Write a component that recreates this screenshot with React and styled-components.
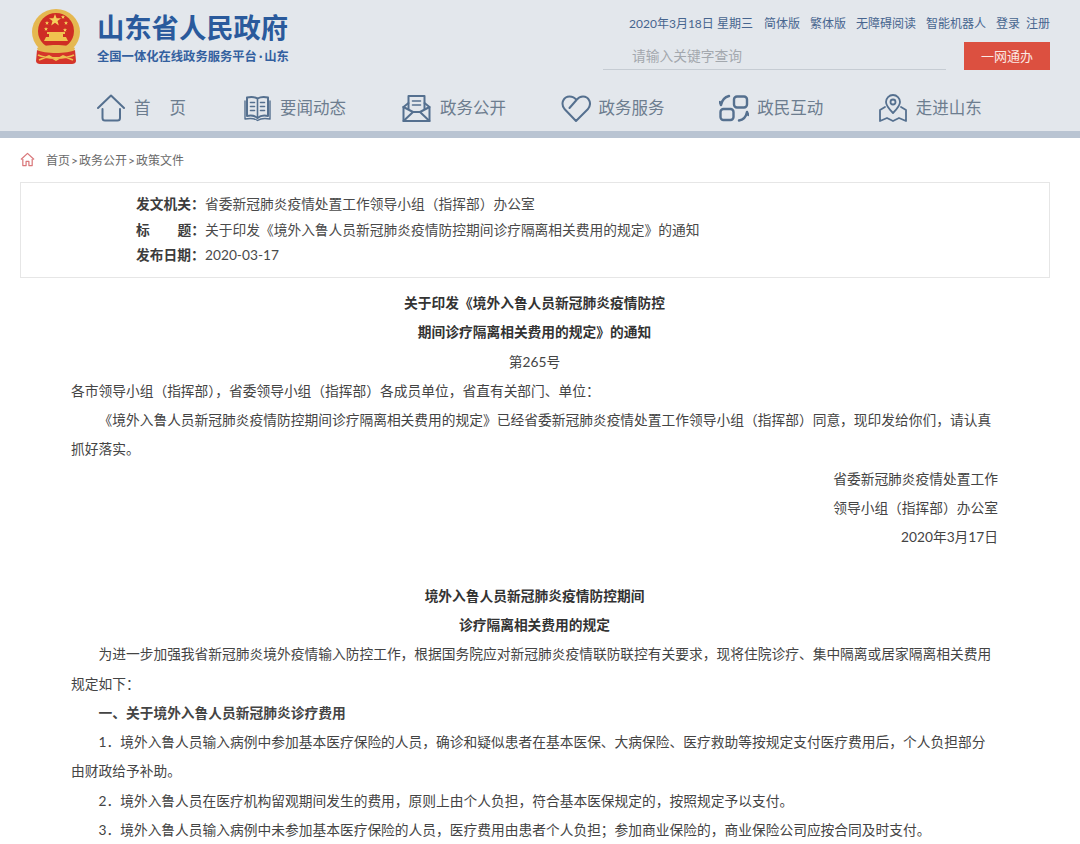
import React from 'react';
import styled, { createGlobalStyle } from 'styled-components';

const GlobalStyle = createGlobalStyle`
  html, body {
    margin: 0;
    padding: 0;
    background: #fff;
    height: 844px;
    overflow: hidden;
  }
  body {
    font-family: Lato, "Noto Sans CJK SC", sans-serif;
    color: #3a3a3a;
  }
`;

const Header = styled.header`
  height: 131px;
  background: #e3e7ec;
  border-bottom: 7px solid #b9c4d2;
  display: flex;
  flex-direction: column;
`;

const TopRow = styled.div`
  display: flex;
  justify-content: space-between;
  height: 85px;
  padding: 0 30px 0 32px;
`;

const Brand = styled.div`
  display: flex;
  align-items: flex-start;
  gap: 17px;
  padding-top: 9px;
`;

const BrandText = styled.div`
  display: flex;
  flex-direction: column;
  padding-top: 1px;
`;

const BrandTitle = styled.div`
  font-size: 27.3px;
  line-height: 36px;
  font-weight: 700;
  color: #2a5a9c;
`;

const BrandSub = styled.div`
  font-size: 12.3px;
  line-height: 20px;
  margin-top: 1px;
  font-weight: 700;
  color: #33609f;
`;

const BrandDot = styled.span`
  margin: 0 2px;
`;

const TopRight = styled.div`
  display: flex;
  flex-direction: column;
  align-items: flex-end;
  padding-top: 15px;
`;

const TopLinks = styled.div`
  display: flex;
  gap: 10px;
  font-size: 12px;
  line-height: 18px;
  color: #47658f;
`;

const DateText = styled.span`
  margin-right: 1px;
`;

const AuthLinks = styled.span`
  display: flex;
  gap: 6px;
`;

const SearchRow = styled.div`
  display: flex;
  gap: 18px;
  margin-top: 9px;
`;

const SearchBox = styled.div`
  width: 343px;
  height: 28px;
  box-sizing: border-box;
  padding-left: 29px;
  border-bottom: 1px solid #c6ccd3;
  font-size: 13.75px;
  line-height: 28px;
  color: #a3a8ae;
`;

const OneButton = styled.div`
  width: 86px;
  height: 28px;
  background: #dc5040;
  color: #fbe9e4;
  font-size: 13px;
  line-height: 28px;
  text-align: center;
`;

const Nav = styled.nav`
  display: flex;
  padding: 8px 0 0 97px;
  height: 46px;
  box-sizing: border-box;
  align-items: flex-start;
`;

const NavItem = styled.div`
  width: ${p => p.$width || 158.6}px;
  flex: none;
  display: flex;
  align-items: center;
  gap: ${p => p.$gap || 8}px;
  font-size: 16.5px;
  line-height: 30px;
  color: #6d7d8f;
  svg {
    width: 30px;
    height: 30px;
    flex: none;
    color: #55708f;
  }
`;

const HomeLabel = styled.span`
  letter-spacing: 19px;
`;

const Crumbs = styled.div`
  display: flex;
  align-items: center;
  gap: 11px;
  height: 44px;
  box-sizing: border-box;
  padding: 0 0 2px 20px;
  font-size: 12px;
  color: #6a6a6a;
  svg {
    width: 15px;
    height: 15px;
    color: #d9777a;
  }
`;

const CrumbSep = styled.span`
  margin: 0 1px;
`;

const InfoCard = styled.section`
  margin: 0 30px 0 20px;
  height: 96px;
  box-sizing: border-box;
  padding: 8px 0 0 115px;
  border: 1px solid #e6e6e6;
`;

const InfoRow = styled.div`
  display: flex;
  font-size: 13.74px;
  line-height: 25.6px;
  color: #4a4a4a;
`;

const InfoLabel = styled.b`
  width: 69px;
  flex: none;
  display: flex;
  justify-content: space-between;
  color: #3c3c3c;
`;

const Article = styled.article`
  padding: 10px 82px 0 71px;
  font-size: 13.74px;
  line-height: 29.28px;
  color: #444;
`;

const Heading = styled.div`
  text-align: center;
  font-weight: 700;
  color: #333;
`;

const Centered = styled.div`
  text-align: center;
`;

const Para = styled.p`
  margin: 0;
  text-indent: ${p => (p.$flush ? 0 : '2em')};
  font-weight: ${p => (p.$bold ? 700 : 400)};
`;

const Signature = styled.div`
  text-align: right;
`;

const Gap = styled.div`
  height: 29.28px;
`;

const strokeProps = {
  viewBox: '0 0 30 30',
  fill: 'none',
  stroke: 'currentColor',
  strokeWidth: 2,
  strokeLinecap: 'round',
  strokeLinejoin: 'round',
};

const smallStar = (x, y) => (
  <polygon
    key={`${x}-${y}`}
    transform={`translate(${x} ${y}) scale(0.4)`}
    points="0,-5 1.4,-1.6 5,-1.6 2.2,0.7 3.2,4.2 0,2.2 -3.2,4.2 -2.2,0.7 -5,-1.6 -1.4,-1.6"
    fill="#f5cf5b"
  />
);

const Emblem = () => (
  <svg width="48" height="56" viewBox="0 0 48 56">
    <ellipse cx="24" cy="23" rx="24" ry="23" fill="#e5b850" />
    <circle cx="24" cy="22" r="18" fill="#cf2d24" />
    <polygon points="23,5 24.6,9.2 29,9.2 25.5,12 26.8,16.4 23,13.8 19.2,16.4 20.5,12 17,9.2 21.4,9.2" fill="#f5cf5b" />
    {[[15, 14], [31, 8], [34, 14], [14, 20], [33, 21]].map(([x, y]) => smallStar(x, y))}
    <path d="M12 32 H36 L34 28 H31 V25 H33 V23 H15 V25 H17 V28 H14 Z" fill="#f0c24f" />
    <path d="M5 39 C12 35 36 35 43 39 L41 44 H7 Z" fill="#e5b850" />
    <path d="M5 41 C12 45 36 45 43 41 L44 52 C44 54 42 55 40 55 L8 55 C6 55 4 54 4 52 Z" fill="#d5352a" />
    <path d="M6 46 C14 50 34 50 42 46 M7 51 L17 47 L24 51 L31 47 L41 51" fill="none" stroke="#edc04f" strokeWidth="1.8" />
  </svg>
);

const HomeIcon = () => (
  <svg {...strokeProps}>
    <path d="M1 15 L14 2.5 L27 15" />
    <path d="M5.5 16 V25 Q5.5 27.5 8 27.5 H20.5 Q23 27.5 23 25 V16" />
  </svg>
);

const BookIcon = () => (
  <svg {...strokeProps}>
    <path d="M3 4.5 C7 3.5 10 3.5 13.5 5.5 C17 3.5 20 3.5 24 4.5 V23 C20 22 17 22 13.5 25 C10 22 7 22 3 23 Z" />
    <path d="M13.5 5.5 V25 M6.5 9.5 H10.5 M6.5 13.5 H10.5 M6.5 17.5 H10.5 M16.5 9.5 H20.5 M16.5 13.5 H20.5 M16.5 17.5 H20.5" strokeWidth="1.6" />
    <path d="M1 8 V26 C6 25 10 25 13.5 27.5 C17 25 21 25 26 26 V8" strokeWidth="1.4" />
  </svg>
);

const MailIcon = () => (
  <svg {...strokeProps}>
    <path d="M1.5 14 V28 H27.5 V14 L22.5 10" />
    <path d="M1.5 14 L6.5 10" />
    <path d="M6.5 16 V3 H22.5 V16" />
    <path d="M10.5 8 H18.5 M10.5 12 H18.5" strokeWidth="1.6" />
    <path d="M1.5 28 L11 19 H18 L27.5 28" />
    <path d="M1.5 14 L11 19 M27.5 14 L18 19" />
  </svg>
);

const HeartIcon = () => (
  <svg {...strokeProps}>
    <path d="M15 28 L3.5 16 C-1 10 3 3.5 8.5 3.5 C11.5 3.5 14 5 15.5 7 L8.5 15 M15.5 7 C17 5 19.5 3.5 22 3.5 C27.5 3.5 31.5 10 27 16 L15 28" />
  </svg>
);

const SwapIcon = () => (
  <svg {...strokeProps} strokeWidth="2.4">
    <rect x="15" y="3.5" width="13" height="11" rx="3" />
    <rect x="1.5" y="16" width="13" height="11" rx="3" />
    <path d="M10 3 C6 4 3 7 2 12 M2 12 L0.8 9" />
    <path d="M20 27.5 C24 27 27 24 28 19 M28 19 L29.4 22" />
  </svg>
);

const MapIcon = () => (
  <svg {...strokeProps} strokeWidth="1.8">
    <path d="M15 20 C11 16 8 13 8 9 A7 7 0 0 1 22 9 C22 13 19 16 15 20 Z" />
    <circle cx="15" cy="9" r="2.5" />
    <path d="M7 14 L2 17 V28 L9 25 L15 28 L21 25 L28 28 V17 L23 14" />
  </svg>
);

const CrumbHome = () => (
  <svg viewBox="0 0 16 16" fill="none" stroke="currentColor" strokeWidth="1.3" strokeLinejoin="round">
    <path d="M1 8 L8 1.5 L15 8" />
    <path d="M3 7.5 V14.5 H6.5 V10 H9.5 V14.5 H13 V7.5" />
  </svg>
);

const navItems = [
  { icon: <HomeIcon />, label: <HomeLabel>首页</HomeLabel>, gap: 7, width: 147 },
  { icon: <BookIcon />, label: '要闻动态', gap: 6, width: 158 },
  { icon: <MailIcon />, label: '政务公开' },
  { icon: <HeartIcon />, label: '政务服务' },
  { icon: <SwapIcon />, label: '政民互动' },
  { icon: <MapIcon />, label: '走进山东' },
];

const App = () => (
  <>
    <GlobalStyle />
    <Header>
      <TopRow>
        <Brand>
          <Emblem />
          <BrandText>
            <BrandTitle>山东省人民政府</BrandTitle>
            <BrandSub>
              全国一体化在线政务服务平台<BrandDot>·</BrandDot>山东
            </BrandSub>
          </BrandText>
        </Brand>
        <TopRight>
          <TopLinks>
            <DateText>2020年3月18日 星期三</DateText>
            <span>简体版</span>
            <span>繁体版</span>
            <span>无障碍阅读</span>
            <span>智能机器人</span>
            <AuthLinks>
              <span>登录</span>
              <span>注册</span>
            </AuthLinks>
          </TopLinks>
          <SearchRow>
            <SearchBox>请输入关键字查询</SearchBox>
            <OneButton>一网通办</OneButton>
          </SearchRow>
        </TopRight>
      </TopRow>
      <Nav>
        {navItems.map((item, i) => (
          <NavItem key={i} $gap={item.gap} $width={item.width}>
            {item.icon}
            <span>{item.label}</span>
          </NavItem>
        ))}
      </Nav>
    </Header>
    <Crumbs>
      <CrumbHome />
      <span>
        首页<CrumbSep>&gt;</CrumbSep>政务公开<CrumbSep>&gt;</CrumbSep>政策文件
      </span>
    </Crumbs>
    <InfoCard>
      <InfoRow>
        <InfoLabel>发文机关：</InfoLabel>
        <span>省委新冠肺炎疫情处置工作领导小组（指挥部）办公室</span>
      </InfoRow>
      <InfoRow>
        <InfoLabel>
          <span>标</span>
          <span>题：</span>
        </InfoLabel>
        <span>关于印发《境外入鲁人员新冠肺炎疫情防控期间诊疗隔离相关费用的规定》的通知</span>
      </InfoRow>
      <InfoRow>
        <InfoLabel>发布日期：</InfoLabel>
        <span>2020-03-17</span>
      </InfoRow>
    </InfoCard>
    <Article>
      <Heading>关于印发《境外入鲁人员新冠肺炎疫情防控</Heading>
      <Heading>期间诊疗隔离相关费用的规定》的通知</Heading>
      <Centered>第265号</Centered>
      <Para $flush>各市领导小组（指挥部），省委领导小组（指挥部）各成员单位，省直有关部门、单位：</Para>
      <Para>《境外入鲁人员新冠肺炎疫情防控期间诊疗隔离相关费用的规定》已经省委新冠肺炎疫情处置工作领导小组（指挥部）同意，现印发给你们，请认真抓好落实。</Para>
      <Signature>省委新冠肺炎疫情处置工作</Signature>
      <Signature>领导小组（指挥部）办公室</Signature>
      <Signature>2020年3月17日</Signature>
      <Gap />
      <Heading>境外入鲁人员新冠肺炎疫情防控期间</Heading>
      <Heading>诊疗隔离相关费用的规定</Heading>
      <Para>为进一步加强我省新冠肺炎境外疫情输入防控工作，根据国务院应对新冠肺炎疫情联防联控有关要求，现将住院诊疗、集中隔离或居家隔离相关费用规定如下：</Para>
      <Para $bold>一、关于境外入鲁人员新冠肺炎诊疗费用</Para>
      <Para>1．境外入鲁人员输入病例中参加基本医疗保险的人员，确诊和疑似患者在基本医保、大病保险、医疗救助等按规定支付医疗费用后，个人负担部分由财政给予补助。</Para>
      <Para>2．境外入鲁人员在医疗机构留观期间发生的费用，原则上由个人负担，符合基本医保规定的，按照规定予以支付。</Para>
      <Para>3．境外入鲁人员输入病例中未参加基本医疗保险的人员，医疗费用由患者个人负担；参加商业保险的，商业保险公司应按合同及时支付。</Para>
    </Article>
  </>
);

export default App;
